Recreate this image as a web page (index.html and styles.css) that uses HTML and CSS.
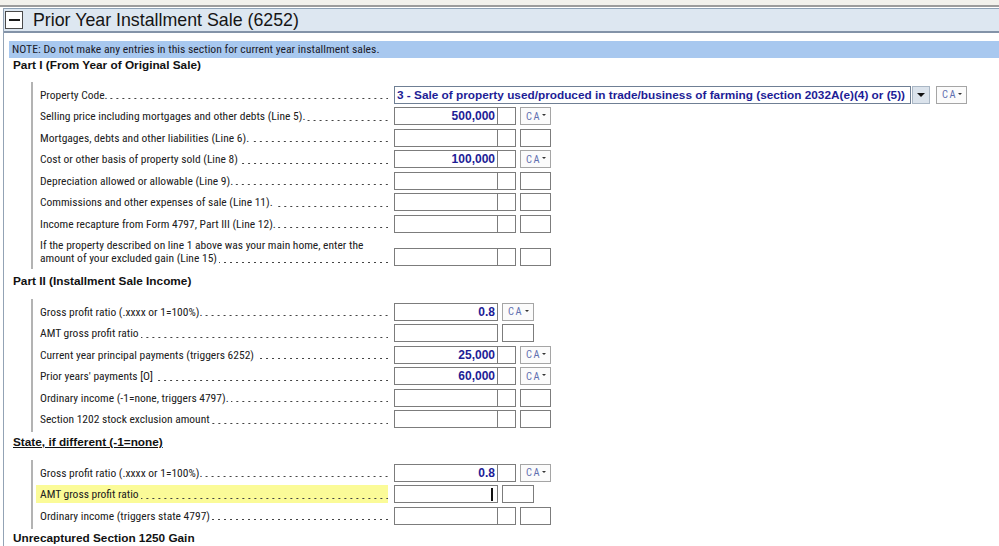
FILE: index.html
```html
<!DOCTYPE html>
<html>
<head>
<meta charset="utf-8">
<title>Prior Year Installment Sale (6252)</title>
<link rel="stylesheet" href="styles.css">
</head>
<body>
<div class="topstrip"></div>
<div class="panel">
  <div class="header">
    <span class="toggle"><span class="minus"></span></span>
    <span class="title">Prior Year Installment Sale (6252)</span>
  </div>
  <div class="note">NOTE: Do not make any entries in this section for current year installment sales.</div>

  <div class="heading h1">Part I (From Year of Original Sale)</div>
  <div class="group">
    <div class="row">
      <div class="label"><span>Property Code.</span><i class="dots"></i></div>
      <div class="fields">
        <div class="box select">3 - Sale of property used/produced in trade/business of farming (section 2032A(e)(4) or (5))</div>
        <div class="box selbtn"><i class="tri"></i></div>
        <div class="box ca wide-gap">CA<i class="tri-s"></i></div>
      </div>
    </div>
    <div class="row">
      <div class="label"><span>Selling price including mortgages and other debts (Line 5).</span><i class="dots"></i></div>
      <div class="fields"><div class="box main">500,000</div><div class="box small"></div><div class="box ca">CA<i class="tri-s"></i></div></div>
    </div>
    <div class="row">
      <div class="label"><span>Mortgages, debts and other liabilities (Line 6).</span><i class="dots"></i></div>
      <div class="fields"><div class="box main"></div><div class="box small"></div><div class="box third"></div></div>
    </div>
    <div class="row">
      <div class="label"><span>Cost or other basis of property sold (Line 8)</span><i class="dots"></i></div>
      <div class="fields"><div class="box main">100,000</div><div class="box small"></div><div class="box ca">CA<i class="tri-s"></i></div></div>
    </div>
    <div class="row">
      <div class="label"><span>Depreciation allowed or allowable (Line 9).</span><i class="dots"></i></div>
      <div class="fields"><div class="box main"></div><div class="box small"></div><div class="box third"></div></div>
    </div>
    <div class="row">
      <div class="label"><span>Commissions and other expenses of sale (Line 11).</span><i class="dots"></i></div>
      <div class="fields"><div class="box main"></div><div class="box small"></div><div class="box third"></div></div>
    </div>
    <div class="row">
      <div class="label"><span>Income recapture from Form 4797, Part III (Line 12).</span><i class="dots"></i></div>
      <div class="fields"><div class="box main"></div><div class="box small"></div><div class="box third"></div></div>
    </div>
    <div class="row tall">
      <div class="label two">
        <div class="line">If the property described on line 1 above was your main home, enter the</div>
        <div class="line flexline"><span>amount of your excluded gain (Line 15)</span><i class="dots"></i></div>
      </div>
      <div class="fields"><div class="box main"></div><div class="box small"></div><div class="box third"></div></div>
    </div>
  </div>

  <div class="heading h2">Part II (Installment Sale Income)</div>
  <div class="group">
    <div class="row">
      <div class="label"><span>Gross profit ratio (.xxxx or 1=100%).</span><i class="dots"></i></div>
      <div class="fields"><div class="box main">0.8</div><div class="box ca near">CA<i class="tri-s"></i></div></div>
    </div>
    <div class="row">
      <div class="label"><span>AMT gross profit ratio</span><i class="dots"></i></div>
      <div class="fields"><div class="box main"></div><div class="box third near"></div></div>
    </div>
    <div class="row">
      <div class="label"><span>Current year principal payments (triggers 6252)</span><i class="dots"></i></div>
      <div class="fields"><div class="box main">25,000</div><div class="box small"></div><div class="box ca">CA<i class="tri-s"></i></div></div>
    </div>
    <div class="row">
      <div class="label"><span>Prior years' payments [O]</span><i class="dots"></i></div>
      <div class="fields"><div class="box main">60,000</div><div class="box small"></div><div class="box ca">CA<i class="tri-s"></i></div></div>
    </div>
    <div class="row">
      <div class="label"><span>Ordinary income (-1=none, triggers 4797).</span><i class="dots"></i></div>
      <div class="fields"><div class="box main"></div><div class="box small"></div><div class="box third"></div></div>
    </div>
    <div class="row">
      <div class="label"><span>Section 1202 stock exclusion amount</span><i class="dots"></i></div>
      <div class="fields"><div class="box main"></div><div class="box small"></div><div class="box third"></div></div>
    </div>
  </div>

  <div class="heading h3"><u>State, if different (-1=none)</u></div>
  <div class="group g3">
    <div class="row">
      <div class="label"><span>Gross profit ratio (.xxxx or 1=100%).</span><i class="dots"></i></div>
      <div class="fields"><div class="box main">0.8</div><div class="box small"></div><div class="box ca">CA<i class="tri-s"></i></div></div>
    </div>
    <div class="row">
      <div class="label hl"><span>AMT gross profit ratio</span><i class="dots"></i></div>
      <div class="fields"><div class="box main caretbox"><i class="caret"></i></div><div class="box third near"></div></div>
    </div>
    <div class="row">
      <div class="label"><span>Ordinary income (triggers state 4797)</span><i class="dots"></i></div>
      <div class="fields"><div class="box main"></div><div class="box small"></div><div class="box third"></div></div>
    </div>
  </div>

  <div class="heading h4">Unrecaptured Section 1250 Gain</div>
</div>
</body>
</html>
```

FILE: styles.css
```css
html, body {
  margin: 0;
  padding: 0;
  background: #ffffff;
}
body {
  width: 999px;
  height: 546px;
  overflow: hidden;
  font-family: "Roboto Condensed", "Roboto", "Liberation Sans", sans-serif;
  font-stretch: condensed;
  font-size: 11.5px;
  color: #202020;
}
.topstrip {
  height: 5px;
  background: #f2f1ec;
  border-bottom: 2px solid #9c9c9c;
  margin-bottom: 1px;
}
.panel {
  margin-left: 3px;
  border-left: 1px solid #93a3b5;
  height: 600px;
}
.header {
  height: 22px;
  border-top: 1px solid #8ea2b6;
  border-bottom: 2px solid #8393a8;
  background: #dde7f1;
  display: flex;
  align-items: center;
}
.toggle {
  width: 16px;
  height: 16px;
  border: 1px solid #4a4a4a;
  background: #fff;
  margin-left: 1px;
  display: flex;
  align-items: center;
  justify-content: center;
}
.minus {
  width: 11px;
  height: 2px;
  background: #1a1a1a;
}
.title {
  margin-left: 10px;
  font-family: "Liberation Sans", Arial, sans-serif;
  font-stretch: normal;
  font-size: 17.8px;
  color: #151515;
}
.note {
  margin: 8px 0 0 5px;
  height: 17px;
  line-height: 17px;
  background: #a8c8ef;
  padding-left: 3px;
  font-size: 11.7px;
  color: #1b1b2b;
}
.heading {
  margin-left: 9px;
  font-family: "Liberation Sans", Arial, sans-serif;
  font-stretch: normal;
  font-size: 11.8px;
  font-weight: bold;
  line-height: 14px;
  height: 14px;
  color: #111;
}
.h1 { margin-top: 0; margin-bottom: 10px; }
.h2 { margin-top: 5.5px; margin-bottom: 11px; }
.h3 { margin-top: 3px; margin-bottom: 11px; }
.h4 { margin-top: 2px; }

.group {
  margin-left: 27px;
  border-left: 2px solid #b3b3b3;
  padding: 2px 0;
}
.row {
  height: 21.5px;
  display: flex;
  align-items: center;
}
.row.tall {
  height: 32px;
  align-items: flex-end;
}
.row.tall .fields { margin-bottom: 1px; }
.label {
  margin-left: 3px;
  width: 348px;
  padding-left: 4px;
  height: 18px;
  display: flex;
  align-items: center;
  white-space: nowrap;
}
.label.two {
  display: block;
  height: auto;
  line-height: 13px;
  padding-bottom: 2px;
}
.flexline {
  display: flex;
  align-items: center;
}
.label.hl {
  background: #fbfb98;
}
.dots {
  flex: 1;
  height: 13px;
  margin-left: 2px;
  background-image: radial-gradient(circle, #444 0.55px, transparent 0.95px);
  background-size: 6px 3px;
  background-repeat: repeat-x;
  background-position: right 4px bottom 1px;
}
.fields {
  margin-left: 6px;
  display: flex;
  align-items: center;
}
.box {
  box-sizing: border-box;
  height: 18px;
  border: 1px solid #7c7c7c;
  background: #fff;
}
.main {
  width: 104px;
  text-align: right;
  padding-right: 2px;
  line-height: 16px;
  font-family: "Liberation Sans", Arial, sans-serif;
  font-stretch: normal;
  font-size: 12px;
  font-weight: bold;
  color: #1d1d96;
}
.small {
  width: 19px;
  margin-left: -1px;
}
.third, .ca {
  width: 31px;
  margin-left: 4px;
}
.near {
  margin-left: 4px;
  width: 32px;
}
.ca {
  display: flex;
  align-items: center;
  justify-content: space-between;
  padding: 0 4px 0 5px;
  color: #5f6fb0;
  font-size: 10.5px;
  letter-spacing: 1.5px;
  border-color: #a5a5a5;
  background: #fbfbfb;
}
.tri-s {
  width: 0;
  height: 0;
  margin-top: -2px;
  border-left: 2px solid transparent;
  border-right: 2px solid transparent;
  border-top: 2px solid #333;
}
.select {
  width: 517px;
  font-family: "Liberation Sans", Arial, sans-serif;
  font-stretch: normal;
  font-size: 11.8px;
  font-weight: bold;
  color: #1d1d96;
  padding-left: 2px;
  line-height: 16px;
  border-color: #6f7f94;
  white-space: nowrap;
  overflow: hidden;
}
.selbtn {
  width: 18px;
  margin-left: 1px;
  background: #dbe3ec;
  border-color: #a9b6c4;
  display: flex;
  align-items: center;
  justify-content: center;
}
.tri {
  width: 0;
  height: 0;
  border-left: 4px solid transparent;
  border-right: 4px solid transparent;
  border-top: 4px solid #111;
}
.wide-gap {
  margin-left: 6px;
}
.caretbox {
  display: flex;
  align-items: center;
  justify-content: flex-end;
  padding-right: 4px;
}
.caret {
  width: 2px;
  height: 13px;
  background: #111;
}
```
